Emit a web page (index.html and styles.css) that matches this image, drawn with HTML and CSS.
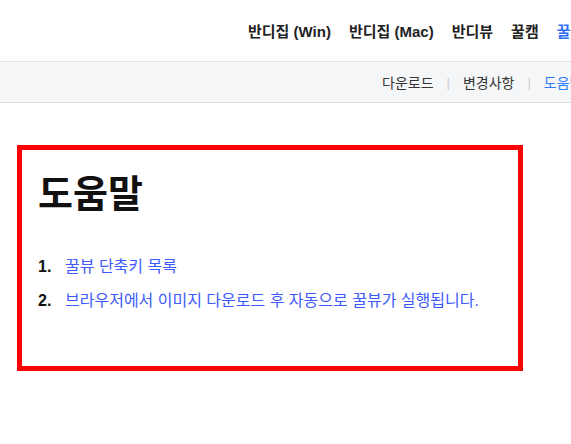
FILE: index.html
```html
<!DOCTYPE html>
<html lang="ko">
<head>
    <meta charset="UTF-8">
    <meta name="viewport" content="width=device-width, initial-scale=1.0">
    <title>꿀뷰 도움말</title>
    <link rel="stylesheet" href="styles.css">
</head>
<body>
    <header class="top-nav">
        <a href="#">반디집 (Win)</a>
        <a href="#">반디집 (Mac)</a>
        <a href="#">반디뷰</a>
        <a href="#">꿀캠</a>
        <a href="#" class="active">꿀뷰</a>
    </header>
    <nav class="sub-nav">
        <a href="#">다운로드</a>
        <span class="sep">|</span>
        <a href="#">변경사항</a>
        <span class="sep">|</span>
        <a href="#" class="active">도움말</a>
    </nav>

    <div class="help-box">
        <h1>도움말</h1>
        <ol>
            <li><a href="#">꿀뷰 단축키 목록</a></li>
            <li><a href="#">브라우저에서 이미지 다운로드 후 자동으로 꿀뷰가 실행됩니다.</a></li>
        </ol>
    </div>
</body>
</html>
```

FILE: styles.css
```css
body {
    margin: 0;
    font-family: "Liberation Sans", "Noto Sans CJK KR", sans-serif;
    background: #fff;
    color: #222;
    overflow: hidden;
}
a {
    text-decoration: none;
}
.top-nav {
    height: 61px;
    display: flex;
    align-items: center;
    gap: 18px;
    padding-left: 248px;
    white-space: nowrap;
    border-bottom: 1px solid #e2e4e8;
}
.top-nav a {
    color: #222;
    font-size: 15px;
    font-weight: bold;
}
.top-nav a.active {
    color: #2f6ff6;
}
.sub-nav {
    height: 40px;
    display: flex;
    align-items: center;
    gap: 13px;
    padding-left: 382px;
    white-space: nowrap;
    background: #f5f6f8;
    border-bottom: 1px solid #dcdee2;
}
.sub-nav a {
    color: #333;
    font-size: 14px;
}
.sub-nav a.active {
    color: #2f7cf6;
}
.sub-nav .sep {
    color: #ccc;
    font-size: 13px;
}
.help-box {
    width: 496px;
    height: 216px;
    margin: 42px 0 0 17px;
    border: 5px solid #ff0000;
    padding: 0;
}
.help-box h1 {
    margin: 20px 0 0 16px;
    font-size: 38px;
    font-weight: bold;
    color: #111;
    line-height: 48px;
}
.help-box ol {
    margin: 39px 0 0 0;
    padding-left: 16px;
    list-style: none;
    counter-reset: item;
}
.help-box li {
    display: flex;
    font-size: 16px;
    line-height: 20px;
    margin-bottom: 14px;
    counter-increment: item;
}
.help-box li::before {
    content: counter(item) ".";
    width: 27px;
    font-weight: bold;
    color: #111;
}
.help-box li a {
    color: #3d5afe;
}
```
